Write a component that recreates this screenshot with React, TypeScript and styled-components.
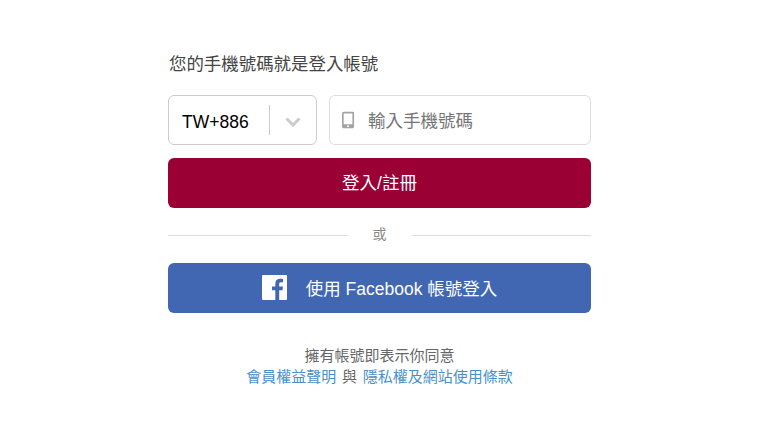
import React from 'react';
import styled, { createGlobalStyle } from 'styled-components';

const GlobalStyle = createGlobalStyle`
  html, body {
    margin: 0;
    padding: 0;
    background: #fff;
    font-family: "Liberation Sans", "Noto Sans CJK TC", sans-serif;
  }
`;

const Page = styled.div`
  width: 757px;
  height: 423px;
  padding: 52px 0 0 168px;
  box-sizing: border-box;
  overflow: hidden;
`;

const Form = styled.div`
  width: 423px;
  display: flex;
  flex-direction: column;
`;

const Heading = styled.div`
  font-size: 17.45px;
  line-height: 24px;
  color: #444;
  padding-left: 1px;
  margin-bottom: 19px;
`;

const PhoneRow = styled.div`
  display: flex;
  gap: 12px;
  margin-bottom: 13px;
`;

const CountrySelect = styled.div`
  width: 149px;
  height: 50px;
  box-sizing: border-box;
  border: 1px solid #ccc;
  border-radius: 6px;
  display: flex;
  align-items: center;
  padding-left: 13px;
`;

const CountryCode = styled.span`
  width: 87px;
  font-size: 17.5px;
  padding-top: 4px;
  color: #000;
`;

const SelectDivider = styled.span`
  width: 1px;
  height: 30px;
  background: #ccc;
`;

const Chevron = styled.svg`
  width: 16px;
  height: 10px;
  margin-left: 15px;
  margin-top: 4px;
`;

const PhoneInput = styled.div`
  flex: 1;
  height: 50px;
  box-sizing: border-box;
  border: 1px solid #ddd;
  border-radius: 6px;
  display: flex;
  align-items: center;
  padding-left: 12px;
  gap: 13px;
`;

const Placeholder = styled.span`
  font-size: 17.5px;
  padding-bottom: 2px;
  color: #757575;
`;

const ActionButton = styled.div<{ $bg: string; $lift: number }>`
  height: 50px;
  box-sizing: border-box;
  padding-bottom: ${p => p.$lift}px;
  border-radius: 6px;
  background: ${p => p.$bg};
  color: #fff;
  font-size: 17.5px;
  display: flex;
  align-items: center;
  justify-content: center;
`;

const FacebookLabel = styled.span`
  margin-left: 19px;
`;

const OrRow = styled.div`
  height: 55px;
  display: flex;
  align-items: center;
  gap: 25px;
  font-size: 14px;
  color: #888;
`;

const OrLabel = styled.span`
  padding-bottom: 6px;
`;

const OrLine = styled.span`
  flex: 1;
  height: 1px;
  background: #ddd;
`;

const Terms = styled.div`
  margin-top: 32px;
  text-align: center;
  font-size: 15px;
  line-height: 21px;
  color: #666;
`;

const TermsAnd = styled.span`
  margin: 0 1.5px;
`;

const TermLink = styled.a`
  color: #4a90c8;
  text-decoration: none;
`;

const App = () => (
  <Page>
    <GlobalStyle />
    <Form>
      <Heading>您的手機號碼就是登入帳號</Heading>
      <PhoneRow>
        <CountrySelect>
          <CountryCode>TW+886</CountryCode>
          <SelectDivider />
          <Chevron viewBox="0 0 16 10">
            <path d="M1.5 1.5 8 8l6.5-6.5" fill="none" stroke="#ccc" strokeWidth="3" />
          </Chevron>
        </CountrySelect>
        <PhoneInput>
          <svg width="13" height="18" viewBox="0 0 14 18">
            <path
              fillRule="evenodd"
              d="M2 0h9.5a1.5 1.5 0 0 1 1.5 1.5V16a2 2 0 0 1-2 2H2a2 2 0 0 1-2-2V2a2 2 0 0 1 2-2zM1.8 2v11.5h9.4V2zM5.5 15v1.5h2V15z"
              fill="#a3a3a3"
            />
          </svg>
          <Placeholder>輸入手機號碼</Placeholder>
        </PhoneInput>
      </PhoneRow>
      <ActionButton $bg="#9b0035" $lift={4}>登入/註冊</ActionButton>
      <OrRow>
        <OrLine />
        <OrLabel>或</OrLabel>
        <OrLine />
      </OrRow>
      <ActionButton $bg="#4267b2" $lift={2}>
        <svg width="25" height="25" viewBox="0 0 25 25">
          <path
            d="M1 0h23a1 1 0 0 1 1 1v23a1 1 0 0 1-1 1h-6.8v-9.7h3.3l.5-3.8h-3.8V9.1c0-1.1.3-1.8 1.9-1.8h2V3.9c-.4 0-1.6-.2-2.9-.2-2.9 0-4.9 1.8-4.9 5v2.8H10v3.8h3.3V25H1a1 1 0 0 1-1-1V1a1 1 0 0 1 1-1z"
            fill="#fff"
          />
        </svg>
        <FacebookLabel>使用 Facebook 帳號登入</FacebookLabel>
      </ActionButton>
      <Terms>
        擁有帳號即表示你同意
        <br />
        <TermLink href="#">會員權益聲明</TermLink> <TermsAnd>與</TermsAnd> <TermLink href="#">隱私權及網站使用條款</TermLink>
      </Terms>
    </Form>
  </Page>
);

export default App;
